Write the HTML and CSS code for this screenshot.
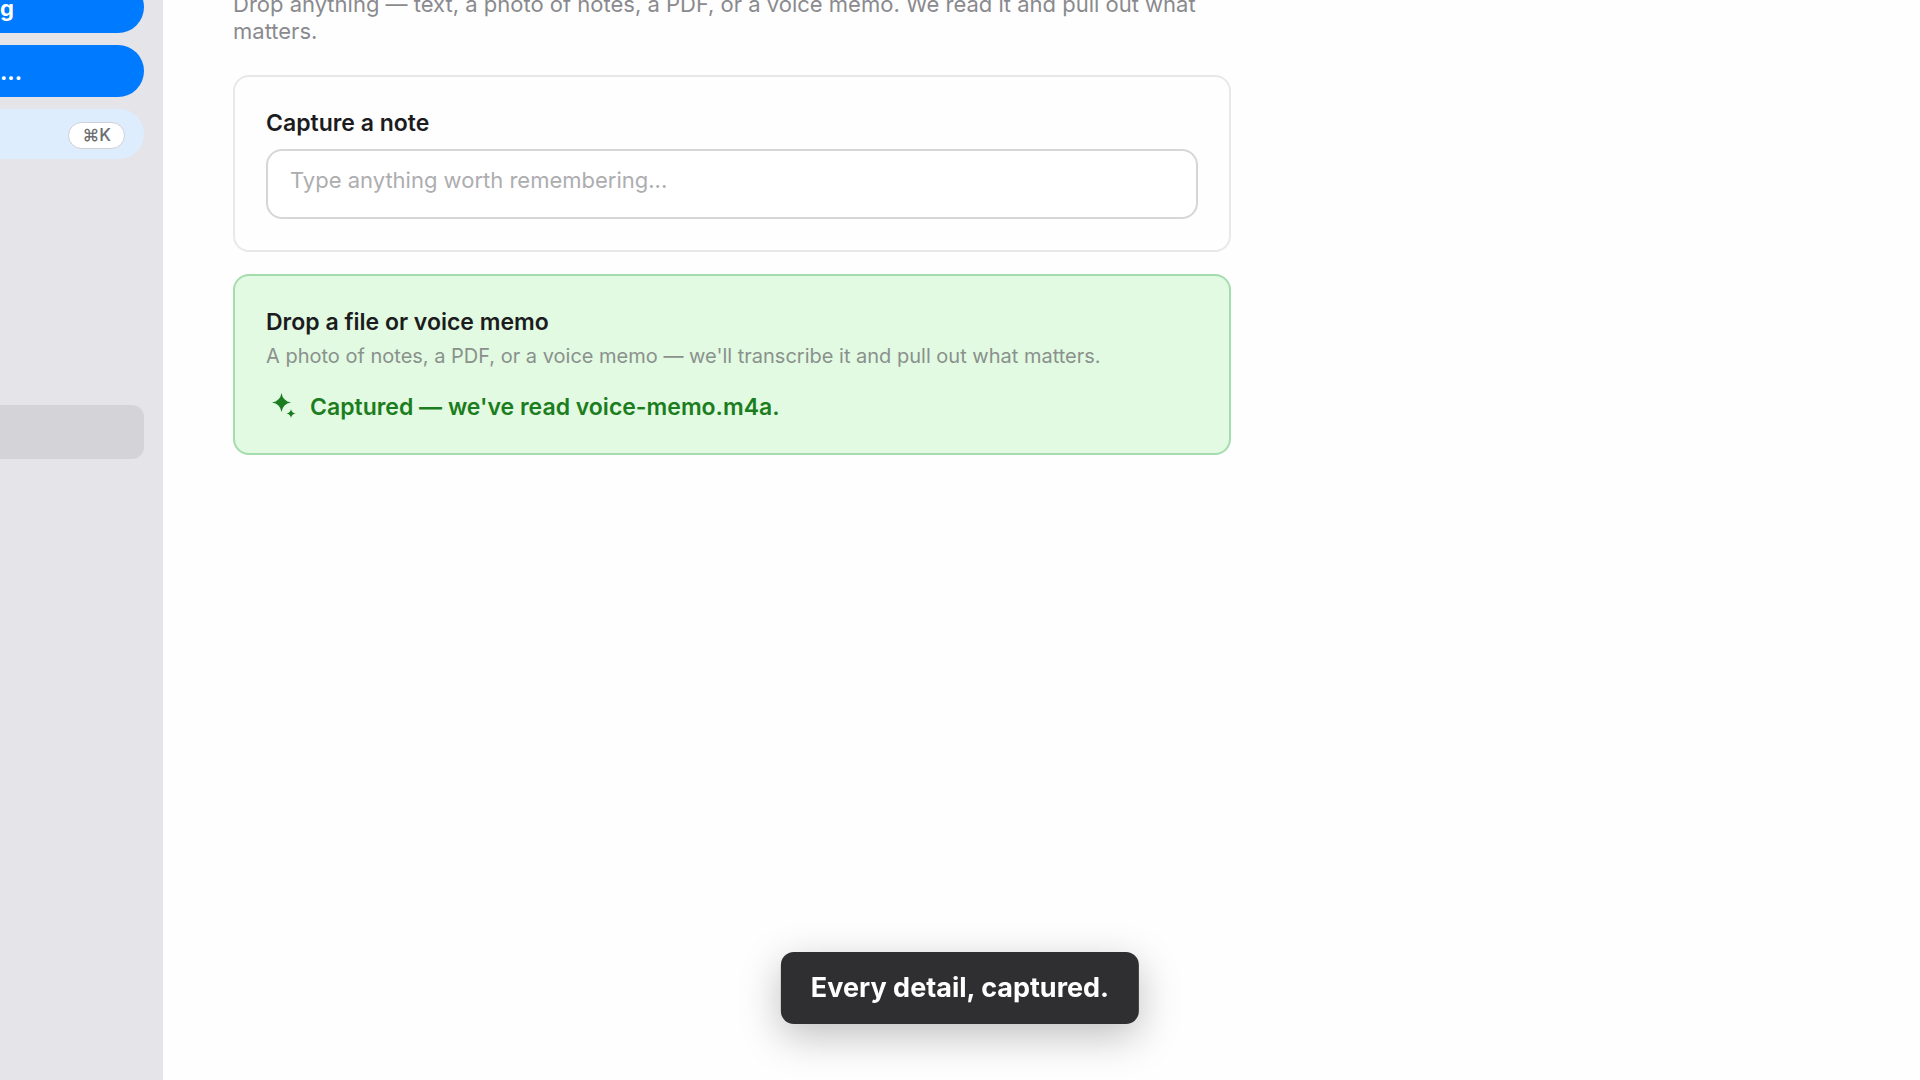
FILE: index.html
```
<!DOCTYPE html>
<html lang="en">

<head>
    <meta charset="UTF-8">
    <meta name="viewport" content="width=device-width, initial-scale=1.0">
    <title>Capture</title>
    <link rel="stylesheet" href="styles.css">
</head>

<body>
    <div class="app">
        <aside class="sidebar">
            <button type="button" class="btn">g</button>
            <button type="button" class="btn">...</button>
            <button type="button" class="btn search" aria-label="Search"><kbd>⌘K</kbd></button>
            <nav class="nav">
                <a href="#" class="nav-item active" aria-label="Capture"></a>
            </nav>
        </aside>

        <main class="content">
            <p class="intro">Drop anything — text, a photo of notes, a PDF, or a voice memo. We read it and pull out what matters.</p>

            <section class="card">
                <label class="card-title" for="note">Capture a note</label>
                <textarea id="note" class="note" rows="1" placeholder="Type anything worth remembering..."></textarea>
            </section>

            <section class="card dropped">
                <h2 class="card-title">Drop a file or voice memo</h2>
                <p class="hint">A photo of notes, a PDF, or a voice memo — we'll transcribe it and pull out what matters.</p>
                <p class="status">
                    <svg class="sparkle" viewBox="0 0 36 30" aria-hidden="true">
                        <path d="M15.500 1 Q16.800 9.200 25 10.500 Q16.800 11.800 15.500 20 Q14.200 11.800 6 10.500 Q14.200 9.200 15.500 1Z" />
                        <path d="M25 17 Q25.600 20.900 29.500 21.500 Q25.600 22.100 25 26 Q24.400 22.100 20.500 21.500 Q24.400 20.900 25 17Z" />
                    </svg>
                    Captured — we've read voice-memo.m4a.
                </p>
            </section>
        </main>
    </div>

    <div class="toast" role="status">Every detail, captured.</div>
</body>

</html>
```

FILE: styles.css
```
* {
    box-sizing: border-box;
}

body {
    margin: 0;
    overflow: hidden;
    font-family: Inter, "Liberation Sans", sans-serif;
    color: #1c1c1e;
    background: #fefefe;
}

.app {
    display: flex;
    min-height: 100vh;
}

/* Sidebar */
.sidebar {
    display: flex;
    flex-direction: column;
    gap: 12px;
    width: 163px;
    padding-right: 19px;
    background: #e5e4e9;
}

.btn {
    display: flex;
    align-items: center;
    height: 52px;
    padding: 2px 0 0;
    border: 0;
    border-radius: 0 26px 26px 0;
    font: 700 22px Inter, "Liberation Sans", sans-serif;
    color: #fff;
    background: #007aff;
}

.btn:first-child {
    margin-top: -19px;
}

.search {
    justify-content: flex-end;
    height: 50px;
    padding-right: 19px;
    background: #deedfe;
}

kbd {
    padding: 0 13px;
    border: 1px solid #cfcfd4;
    border-radius: 14px;
    font: 500 17px/25px Inter, "DejaVu Sans", sans-serif;
    color: #6c6c70;
    background: #fff;
}

.nav {
    margin-top: 234px;
}

.nav-item {
    display: block;
    height: 54px;
    border-radius: 0 12px 12px 0;
}

.nav-item.active {
    background: #d4d3d8;
}

/* Main column */
.content {
    flex: 1;
    max-width: 1068px;
    margin-top: -9px;
    padding: 0 0 0 70px;
}

p,
h2 {
    margin: 0;
}

.intro {
    margin-bottom: 30px;
    font-size: 22px;
    line-height: 27px;
    color: #8a8a8e;
}

.card {
    padding: 31px;
    margin-bottom: 22px;
    border: 2px solid #e8e8ea;
    border-radius: 16px;
}

.card-title {
    display: block;
    font-size: 23px;
    font-weight: 600;
    line-height: 31px;
}

.note {
    display: block;
    width: 100%;
    height: 70px;
    margin-top: 10px;
    padding: 15px 22px;
    border: 2px solid #d6d6d8;
    border-radius: 16px;
    font: 22px/28px Inter, "Liberation Sans", sans-serif;
    background: #fff;
    resize: none;
    overflow: hidden;
}

.note::placeholder {
    color: #adadb0;
}

.dropped {
    border-color: #a5dcae;
    background: #e1fae1;
}

.hint {
    margin-top: 4px;
    font-size: 20px;
    line-height: 28px;
    color: #8a918d;
}

.status {
    display: flex;
    align-items: center;
    gap: 8px;
    margin-top: 22px;
    font-size: 23px;
    font-weight: 600;
    line-height: 30px;
    color: #1c7d20;
}

.sparkle {
    width: 36px;
    height: 30px;
    fill: currentColor;
}

/* Toast */
.toast {
    position: fixed;
    bottom: 56px;
    left: 50%;
    transform: translateX(-50%);
    padding: 18px 30px;
    border-radius: 13px;
    font-size: 27px;
    font-weight: 700;
    line-height: 36px;
    white-space: nowrap;
    color: #fff;
    background: #2f2f31;
    box-shadow: 0 12px 40px rgba(0, 0, 0, 0.25);
}
```
